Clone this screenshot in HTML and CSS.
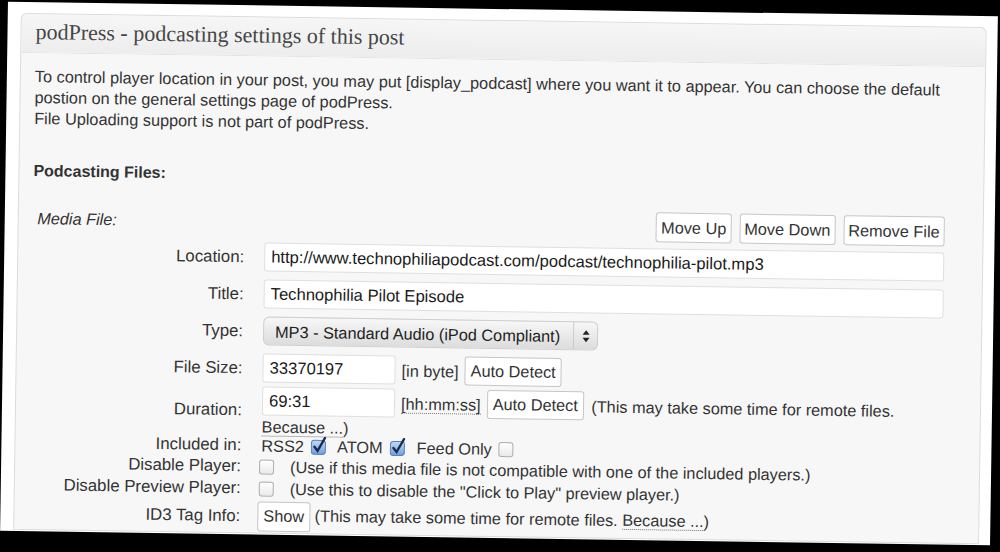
FILE: index.html
```html
<!DOCTYPE html>
<html lang="en">
<head>
    <meta charset="UTF-8">
    <title>podPress - podcasting settings of this post</title>
    <link rel="stylesheet" href="styles.css">
</head>
<body>
    <div class="screen">
        <div class="postbox">
            <h3 class="hndle">podPress - podcasting settings of this post</h3>
            <div class="inside">
                <p class="intro">To control player location in your post, you may put [display_podcast] where you want it to appear. You can choose the default postion on the general settings page of podPress.<br>File Uploading support is not part of podPress.</p>

                <h4 class="section-title">Podcasting Files:</h4>

                <div class="media-head">
                    <em class="media-label">Media File:</em>
                    <div class="file-actions">
                        <button class="button">Move Up</button>
                        <button class="button">Move Down</button>
                        <button class="button">Remove File</button>
                    </div>
                </div>

                <table class="file-table">
                    <tr class="row-field">
                        <th>Location:</th>
                        <td><input class="text-wide" type="text" value="http://www.technophiliapodcast.com/podcast/technophilia-pilot.mp3"></td>
                    </tr>
                    <tr class="row-field">
                        <th>Title:</th>
                        <td><input class="text-wide" type="text" value="Technophilia Pilot Episode"></td>
                    </tr>
                    <tr class="row-field">
                        <th>Type:</th>
                        <td>
                            <div class="select-box">
                                <span class="select-value">MP3 - Standard Audio (iPod Compliant)</span>
                                <span class="select-arrows">
                                    <svg width="8" height="14" viewBox="0 0 8 14"><path d="M4 1 L7.5 5.5 H0.5 Z M4 13 L7.5 8.5 H0.5 Z" fill="#222"/></svg>
                                </span>
                            </div>
                        </td>
                    </tr>
                    <tr class="row-field">
                        <th>File Size:</th>
                        <td><input class="text-short" type="text" value="33370197"> <span class="hint">[in byte]</span> <button class="button button-inline">Auto Detect</button></td>
                    </tr>
                    <tr class="row-duration">
                        <th>Duration:</th>
                        <td><input class="text-short" type="text" value="69:31"> <span class="hint dotted">[hh:mm:ss]</span> <button class="button button-inline">Auto Detect</button> <span class="note">(This may take some time for remote files. <span class="dotted">Because ...</span>)</span></td>
                    </tr>
                    <tr class="row-check">
                        <th>Included in:</th>
                        <td>
                            RSS2 <svg class="cb" width="17" height="19" viewBox="0 0 17 19"><defs><linearGradient id="blue" x1="0" y1="0" x2="0" y2="1"><stop offset="0" stop-color="#c3dbf6"/><stop offset="1" stop-color="#6d9ddf"/></linearGradient></defs><rect x="1" y="4" width="14" height="14" rx="3" fill="url(#blue)" stroke="#5b80b6"/><path d="M4 10.5 L7.2 14.5 L14.5 1.5" fill="none" stroke="#1b2a4a" stroke-width="2.3" stroke-linecap="round"/></svg>
                            ATOM <svg class="cb" width="17" height="19" viewBox="0 0 17 19"><rect x="1" y="4" width="14" height="14" rx="3" fill="url(#blue)" stroke="#5b80b6"/><path d="M4 10.5 L7.2 14.5 L14.5 1.5" fill="none" stroke="#1b2a4a" stroke-width="2.3" stroke-linecap="round"/></svg>
                            Feed Only <span class="cb-empty"></span>
                        </td>
                    </tr>
                    <tr class="row-check row-gap">
                        <th>Disable Player:</th>
                        <td><span class="cb-empty cb-lead"></span>(Use if this media file is not compatible with one of the included players.)</td>
                    </tr>
                    <tr class="row-check row-gap">
                        <th>Disable Preview Player:</th>
                        <td><span class="cb-empty cb-lead"></span>(Use this to disable the "Click to Play" preview player.)</td>
                    </tr>
                    <tr class="row-id3">
                        <th>ID3 Tag Info:</th>
                        <td><button class="button button-show">Show</button> (This may take some time for remote files. <span class="dotted">Because ...</span>)</td>
                    </tr>
                </table>
            </div>
        </div>
    </div>
</body>
</html>
```

FILE: styles.css
```css
* {
    margin: 0;
    padding: 0;
    box-sizing: border-box;
}

body {
    background: #000;
    font-family: 'Liberation Sans', Arial, Helvetica, sans-serif;
    font-size: 16.3px;
    color: #333;
    height: 552px;
    overflow: hidden;
}

/* the captured window, slightly tilted like the photo */
.screen {
    width: 990px;
    margin: 9px 0 0 4px;
    padding: 11px 11px 1px 12.5px;
    background: #fff;
    transform: rotate(0.85deg);
}

.postbox {
    border: 1px solid #dcdcdc;
    border-radius: 6px 6px 0 0;
    background: #f7f7f7;
}

.hndle {
    height: 39px;
    padding: 0 0 0 14.5px;
    line-height: 36px;
    font-family: 'Liberation Serif', Georgia, 'Times New Roman', serif;
    font-size: 22px;
    font-weight: normal;
    color: #464646;
    background: linear-gradient(#f6f6f6, #ededed);
    border-bottom: 1px solid #e2e2e2;
    border-radius: 6px 6px 0 0;
}

.inside {
    padding: 13px 38px 1px 14.5px;
}

.intro {
    line-height: 21px;
}

.section-title {
    margin-top: 32px;
    font-size: 16px;
    line-height: 20px;
    font-weight: bold;
}

.media-head {
    display: flex;
    justify-content: space-between;
    align-items: center;
    height: 30px;
    margin-top: 22px;
}

.media-label {
    padding-left: 4.5px;
}

.file-actions {
    display: flex;
    gap: 8px;
}

.button {
    height: 30px;
    padding: 0 4px;
    font-family: inherit;
    font-size: 16.3px;
    color: #333;
    background: #fff;
    border: 1px solid #c6c6c6;
    border-radius: 3px;
}

.file-table {
    width: 100%;
    margin-top: 2px;
    border-collapse: collapse;
}

.file-table th {
    width: 234px;
    padding-right: 20px;
    text-align: right;
    font-size: 16.8px;
    font-weight: normal;
    vertical-align: middle;
    white-space: nowrap;
}

.file-table td {
    vertical-align: middle;
    line-height: 18px;
}

.row-field th,
.row-field td {
    padding-top: 4px;
    padding-bottom: 4px;
}

.row-duration th,
.row-duration td {
    padding-top: 0;
}

.row-check th,
.row-check td {
    height: 20px;
    line-height: 20px;
}

.row-gap th,
.row-gap td {
    height: 22px;
}

.row-id3 th,
.row-id3 td {
    padding-top: 2px;
}

.text-wide,
.text-short {
    height: 29px;
    padding: 0 6px;
    font-family: inherit;
    font-size: 16.6px;
    color: #1a1a1a;
    background: #fff;
    border: 1px solid #dfdfdf;
    border-radius: 3px;
    vertical-align: middle;
}

.text-wide {
    width: 680px;
}

.text-short {
    width: 133px;
}

.hint {
    margin-left: 1.5px;
    vertical-align: middle;
}

.button-inline {
    height: 29px;
    margin-left: 1.5px;
    padding: 0 5px;
    vertical-align: middle;
}

.note {
    margin-left: 3px;
    vertical-align: middle;
}

.dotted {
    border-bottom: 1px dotted #777;
}

.select-box {
    display: flex;
    align-items: center;
    width: 335px;
    height: 29px;
    background: linear-gradient(#f7f7f7, #dcdcdc);
    border: 1px solid #cfcfcf;
    border-radius: 6px;
}

.select-value {
    flex: 1;
    padding-left: 11px;
    color: #222;
    white-space: nowrap;
}

.select-arrows {
    display: flex;
    align-items: center;
    justify-content: center;
    width: 24px;
    height: 100%;
    border-left: 1px solid #c9c9c9;
}

.cb {
    vertical-align: -3px;
    margin: 0 6px 0 2px;
}

.cb-empty {
    display: inline-block;
    width: 15px;
    height: 15px;
    margin-left: 2px;
    vertical-align: -2px;
    background: linear-gradient(#fff, #e9e9e9);
    border: 1px solid #adadad;
    border-radius: 3px;
}

.cb-lead {
    margin: 0 16px 0 -2px;
}

.button-show {
    height: 30px;
    margin-left: -3px;
    padding: 0 5px;
    vertical-align: middle;
}
```
